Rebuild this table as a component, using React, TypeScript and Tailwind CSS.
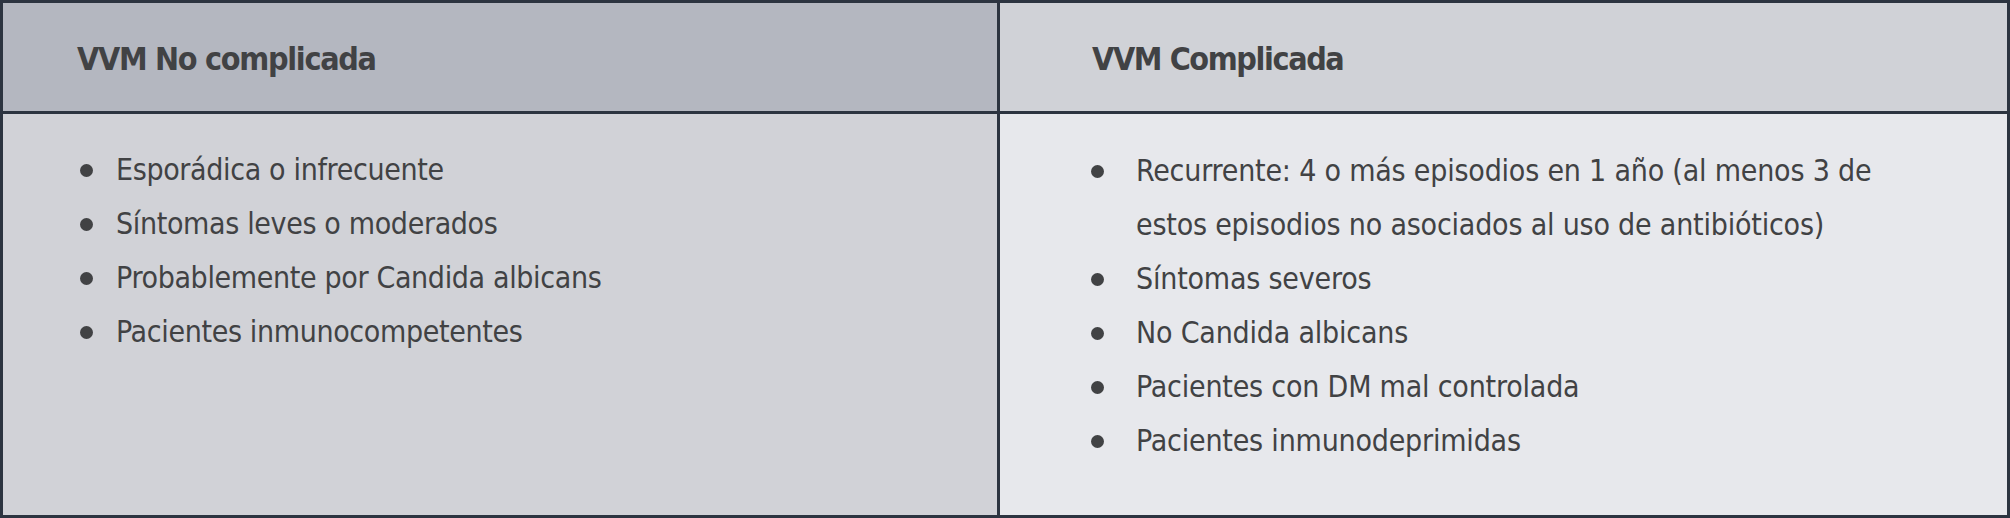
const noComplicada = [
  'Esporádica o infrecuente',
  'Síntomas leves o moderados',
  'Probablemente por Candida albicans',
  'Pacientes inmunocompetentes',
];

const complicada = [
  'Recurrente: 4 o más episodios en 1 año (al menos 3 de estos episodios no asociados al uso de antibióticos)',
  'Síntomas severos',
  'No Candida albicans',
  'Pacientes con DM mal controlada',
  'Pacientes inmunodeprimidas',
];

function BulletList({ items, className, gap }: { items: string[]; className: string; gap: string }) {
  return (
    <ul className={className}>
      {items.map((item) => (
        <li key={item} className="flex items-start">
          <span className={`mt-[21px] h-[13px] w-[13px] shrink-0 rounded-full bg-[#414244] ${gap}`} />
          <span>{item}</span>
        </li>
      ))}
    </ul>
  );
}

export default function App() {
  return (
    <div className="h-[518px] w-[2010px] bg-white font-['DejaVu_Sans_Condensed','DejaVu_Sans',sans-serif] text-[#414244]">
      <div className="grid h-full w-full grid-cols-[997px_1fr] grid-rows-[111px_1fr] border-[3px] border-[#2c3440]">
        <div className="flex items-center border-r-[3px] border-b-[3px] border-[#2c3440] bg-[#b4b7c0] pl-[74px] pt-[4px]">
          <h2 className="text-[32px] font-bold leading-none tracking-[-1.3px]">VVM No complicada</h2>
        </div>
        <div className="flex items-center border-b-[3px] border-[#2c3440] bg-[#d0d2d7] pl-[92px] pt-[4px]">
          <h2 className="text-[32px] font-bold leading-none tracking-[-1.4px]">VVM Complicada</h2>
        </div>
        <div className="border-r-[3px] border-[#2c3440] bg-[#d1d2d7] pl-[77px] pt-[29px]">
          <BulletList
            items={noComplicada}
            gap="mr-[23px]"
            className="text-[30px] leading-[54px] tracking-[-0.35px]"
          />
        </div>
        <div className="bg-[#e7e8ec] pl-[91px] pt-[30px]">
          <BulletList
            items={complicada}
            gap="mr-[32px]"
            className="w-[830px] text-[30px] leading-[54px] tracking-[-0.2px]"
          />
        </div>
      </div>
    </div>
  );
}
